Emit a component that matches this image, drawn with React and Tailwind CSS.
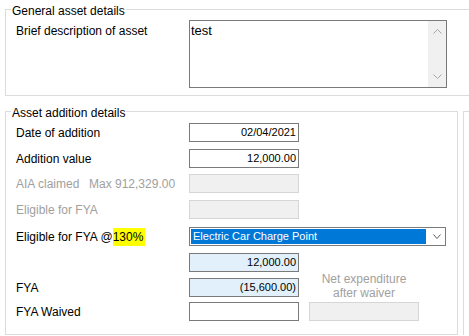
import React from "react";

const Chevron = ({ up = false, color = "#a6a6a6", w = 9, h = 5 }) => (
  <svg width={w} height={h} viewBox={`0 0 ${w} ${h}`} className="block">
    {up ? (
      <polyline points={`0.5,${h - 0.5} ${w / 2},0.5 ${w - 0.5},${h - 0.5}`} fill="none" stroke={color} strokeWidth="1" />
    ) : (
      <polyline points={`0.5,0.5 ${w / 2},${h - 0.5} ${w - 0.5},0.5`} fill="none" stroke={color} strokeWidth="1" />
    )}
  </svg>
);

export default function App() {
  return (
    <div className="w-[469px] h-[336px] overflow-hidden bg-white font-['Liberation_Sans',Arial,sans-serif] text-[12px] text-black">
      {/* General asset details */}
      <div className="relative mt-[9px] ml-[5px] w-[480px] h-[87px] border border-[#dcdcdc]">
        <span className="absolute left-[5px] -top-[6px] bg-white px-[1px] leading-[14px]">General asset details</span>
        <div className="flex pl-[10px] pt-[10px]">
          <div className="w-[173px] mt-[4px] leading-[14px]">Brief description of asset</div>
          <div className="flex w-[258px] h-[68px] border border-[#7a7a7a]">
            <div className="flex-1 pl-[1px] pt-[3px] leading-[14px] text-[13px]">test</div>
            <div className="w-[18px] h-full bg-[#f0f0f0] flex flex-col items-center justify-between pt-[8px] pb-[8px]">
              <Chevron up />
              <Chevron />
            </div>
          </div>
        </div>
      </div>

      {/* Asset addition details */}
      <div className="flex mt-[15px] ml-[5px]">
        <div className="relative w-[453px] h-[224px] border border-[#dcdcdc]">
          <span className="absolute left-[5px] -top-[6px] bg-white px-[1px] leading-[14px]">Asset addition details</span>
          <div className="flex flex-col pl-[10px] pt-[11px]">
            {/* Date of addition */}
            <div className="flex items-center h-[19px]">
              <div className="w-[173px]">Date of addition</div>
              <div className="w-[110px] h-[19px] border border-[#7a7a7a] bg-white text-right pr-[2px] text-[11px] leading-[17px]">02/04/2021</div>
            </div>
            {/* Addition value */}
            <div className="flex items-center h-[19px] mt-[7px]">
              <div className="w-[173px]">Addition value</div>
              <div className="w-[110px] h-[19px] border border-[#7a7a7a] bg-white text-right pr-[2px] text-[11px] leading-[17px]">12,000.00</div>
            </div>
            {/* AIA claimed */}
            <div className="flex items-center h-[19px] mt-[6px]">
              <div className="w-[173px] flex text-[#a0a0a0]">
                <span className="w-[73px]">AIA claimed</span>
                <span>Max 912,329.00</span>
              </div>
              <div className="w-[110px] h-[19px] border border-[#d6d6d6] bg-[#f0f0f0]"></div>
            </div>
            {/* Eligible for FYA */}
            <div className="flex items-center h-[19px] mt-[7px]">
              <div className="w-[173px] text-[#a0a0a0]">Eligible for FYA</div>
              <div className="w-[110px] h-[19px] border border-[#d6d6d6] bg-[#f0f0f0]"></div>
            </div>
            {/* Eligible for FYA @130% */}
            <div className="flex items-center h-[19px] mt-[8px]">
              <div className="w-[173px] flex items-center">
                <span>Eligible for FYA @</span>
                <span className="bg-[#ffff00] leading-[18px] pr-[2px]">130%</span>
              </div>
              <div className="flex w-[257px] h-[19px] border border-[#7a7a7a] p-[1px] bg-white">
                <div className="w-[235px] h-full bg-[#0078d7] text-white text-[11px] leading-[15px] pl-[2px]">Electric Car Charge Point</div>
                <div className="w-[18px] h-full flex items-center pl-[7px]">
                  <Chevron color="#606060" w={8} h={5} />
                </div>
              </div>
            </div>
            {/* blank label row */}
            <div className="flex items-center h-[19px] mt-[7px]">
              <div className="w-[173px]"></div>
              <div className="w-[110px] h-[19px] border border-[#7a7a7a] bg-[#e1f0fb] text-right pr-[2px] text-[11px] leading-[17px]">12,000.00</div>
            </div>
            {/* FYA + FYA Waived with Net expenditure */}
            <div className="flex items-end">
              <div className="flex flex-col">
                <div className="flex items-center h-[19px]">
                  <div className="w-[173px]">FYA</div>
                  <div className="w-[110px] h-[19px] border border-[#7a7a7a] bg-[#e1f0fb] text-right pr-[2px] text-[11px] leading-[17px]">(15,600.00)</div>
                </div>
                <div className="flex items-center h-[19px] mt-[5px]">
                  <div className="w-[173px]">FYA Waived</div>
                  <div className="w-[110px] h-[19px] border border-[#7a7a7a] bg-white"></div>
                </div>
              </div>
              <div className="ml-[10px] w-[110px] flex flex-col items-center">
                <div className="text-center text-[#a0a0a0] leading-[14px]">
                  Net expenditure
                  <br />
                  after waiver
                </div>
                <div className="mt-[2px] w-[110px] h-[19px] border border-[#d6d6d6] bg-[#f0f0f0]"></div>
              </div>
            </div>
          </div>
        </div>
        <div className="ml-[5px] flex-1 h-[224px] border-l border-t border-[#dcdcdc]"></div>
      </div>
    </div>
  );
}
